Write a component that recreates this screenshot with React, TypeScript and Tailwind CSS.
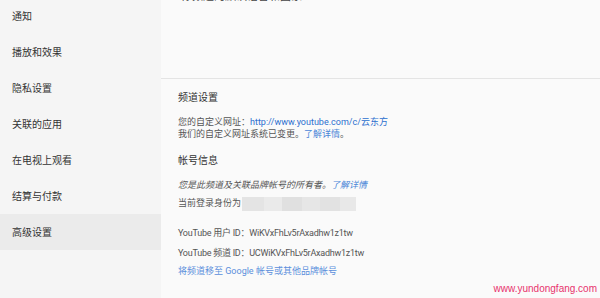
import React from "react";

const font = { fontFamily: 'Roboto, "Noto Sans CJK SC", sans-serif' };

export default function App() {
  const items = ["通知", "播放和效果", "隐私设置", "关联的应用", "在电视上观看", "结算与付款", "高级设置"];
  return (
    <div className="relative flex w-[600px] h-[298px] overflow-hidden bg-[#fafafa] text-[#333]" style={font}>
      <div className="w-[161px] shrink-0 bg-[#f5f5f5]">
        <div className="-mt-[2px] flex flex-col">
          {items.map((t) => (
            <div
              key={t}
              className={`h-[36px] flex items-center pl-[12px] text-[10px] text-[#333] ${t === "高级设置" ? "bg-[#ebebeb]" : ""}`}
            >
              {t}
            </div>
          ))}
        </div>
      </div>
      <div className="flex-1 flex flex-col">
        <div className="h-[79px] border-b border-[#e4e4e4] pl-[20px]">
          <div className="-mt-[9px] text-[11px] leading-[12px] text-[#444]">你频道的默认语言和国家</div>
        </div>
        <div className="pl-[17px] flex flex-col">
          <div className="mt-[12px] text-[10px] leading-[14px] text-[#333]">频道设置</div>
          <div className="mt-[11px] text-[9px] leading-[12px] text-[#555]">
            您的自定义网址：<span className="text-[#2c6fcf]">http://www.youtube.com/c/云东方</span>
          </div>
          <div className="text-[9px] leading-[12px] text-[#555]">
            我们的自定义网址系统已变更。<span className="text-[#4a86d8]">了解详情</span>。
          </div>
          <div className="mt-[14px] text-[10px] leading-[14px] text-[#333]">帐号信息</div>
          <div className="mt-[11px] text-[9px] leading-[12px] italic text-[#555]">
            您是此频道及关联品牌帐号的所有者。<span className="text-[#4a86d8]">了解详情</span>
          </div>
          <div className="mt-[6px] h-[14px] flex items-center text-[9px] text-[#555]">
            <span>当前登录身份为</span>
            <div className="ml-[1px] flex h-[14px] w-[114px] overflow-hidden">
              <div className="w-[22px] bg-[#e4e4e4]" />
              <div className="w-[18px] bg-[#eaeaea]" />
              <div className="w-[20px] bg-[#e0e0e0]" />
              <div className="w-[18px] bg-[#e6e6e6]" />
              <div className="w-[20px] bg-[#e2e2e2]" />
              <div className="w-[16px] bg-[#e8e8e8]" />
            </div>
          </div>
          <div className="mt-[16px] text-[9px] leading-[12px] tracking-[-0.25px] text-[#555]">YouTube 用户 ID：WiKVxFhLv5rAxadhw1z1tw</div>
          <div className="mt-[8px] text-[9px] leading-[12px] tracking-[-0.25px] text-[#555]">YouTube 频道 ID：UCWiKVxFhLv5rAxadhw1z1tw</div>
          <div className="mt-[6px] text-[9px] leading-[12px] text-[#5b8fdc]">将频道移至 Google 帐号或其他品牌帐号</div>
        </div>
      </div>
      <div
        className="absolute right-[3px] bottom-[3px] text-[10px] leading-[12px] text-[#e8336d]"
        style={{ fontFamily: '"Liberation Sans", Arial, sans-serif' }}
      >
        www.yundongfang.com
      </div>
    </div>
  );
}
